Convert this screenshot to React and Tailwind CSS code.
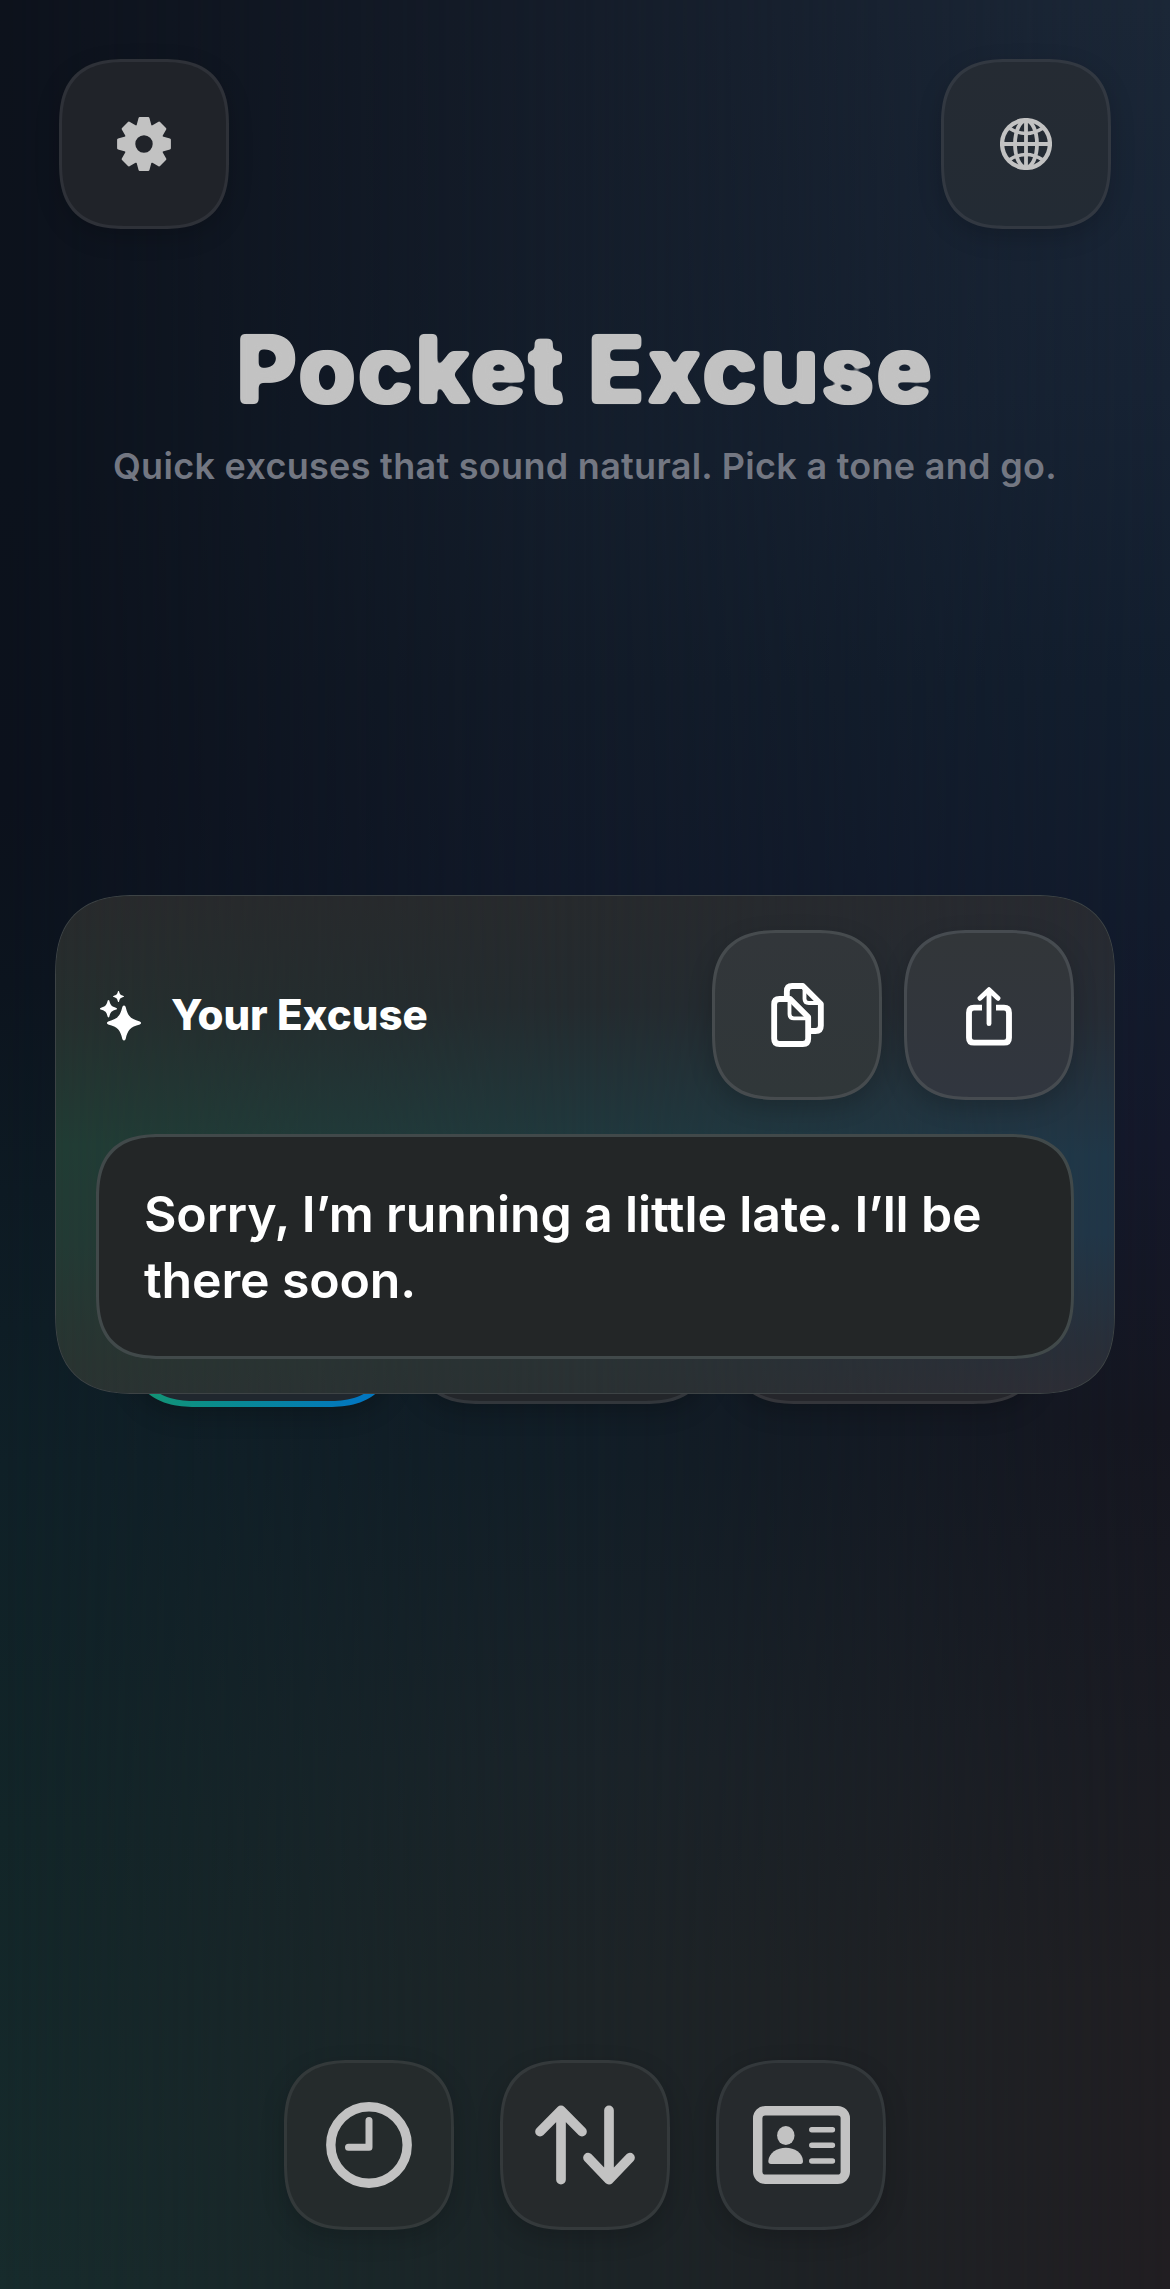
function Tile({ className, children }) {
  return (
    <button
      className={`flex size-[170px] shrink-0 items-center justify-center rounded-[68px] border-[3px] [corner-shape:superellipse(1.39)] ${className}`}
    >
      {children}
    </button>
  );
}

function GearIcon() {
  const angles = [0, 45, 90, 135, 180, 225, 270, 315];
  return (
    <svg className="size-[54px]" viewBox="-27 -27 54 54" fill="none">
      <circle r="14.4" stroke="#c2c2c2" strokeWidth="11.4" />
      {angles.map((a) => (
        <path
          key={a}
          transform={`rotate(${a})`}
          d="M-6.4 -17.5 L-4.2 -25.6 H4.2 L6.4 -17.5 Z"
          fill="#c2c2c2"
          stroke="#c2c2c2"
          strokeWidth="2.6"
          strokeLinejoin="round"
        />
      ))}
    </svg>
  );
}

function GlobeIcon() {
  return (
    <svg className="size-[52px]" viewBox="-26 -26 52 52" fill="none" stroke="#c2c2c2">
      <circle r="23.9" strokeWidth="4.3" />
      <path d="M0 -24 V24 M-24 0 H24" strokeWidth="3.8" />
      <ellipse rx="11" ry="23.5" strokeWidth="3.8" />
      <path d="M-17 -16 Q0 -5 17 -16 M-17 16 Q0 5 17 16" strokeWidth="3.6" />
    </svg>
  );
}

const STAR =
  "M-1.6 -16.2 Q0 -18.8 1.6 -16.2 C4 -6.6 6 -4.4 15.8 -1.6 Q18.4 0 15.8 1.6 C6 4.4 4 6.6 1.6 16.2 Q0 18.8 -1.6 16.2 C-4 6.6 -6 4.4 -15.8 1.6 Q-18.4 0 -15.8 -1.6 C-6 -4.4 -4 -6.6 -1.6 -16.2 Z";

function SparklesIcon() {
  return (
    <svg className="h-[50px] w-[42px]" viewBox="0 0 42 50" fill="#fff">
      <path transform="translate(24 32)" d={STAR} />
      <path transform="translate(8.5 17.7) scale(0.5)" d={STAR} />
      <path transform="translate(18.5 5.5) scale(0.32)" d={STAR} />
    </svg>
  );
}

function CopyIcon() {
  return (
    <svg className="h-[64px] w-[53px]" viewBox="246 309 158 192" fill="none" stroke="#fff" strokeLinejoin="round">
      <path
        d="M271 357 H303 L357 411 V476 Q357 492 341 492 H271 Q255 492 255 476 V373 Q255 357 271 357 Z"
        strokeWidth="17.5"
      />
      <path d="M301 360 V402 Q301 415 314 415 H355" strokeWidth="11.5" />
      <path d="M293 349 V334 Q293 318 309 318 H341 L395 372 V437 Q395 453 379 453 H365" strokeWidth="17.5" />
      <path d="M346 322 V356 Q346 369 359 369 H393" strokeWidth="11.5" />
    </svg>
  );
}

function ShareIcon() {
  return (
    <svg className="mt-[3px] h-[59px] w-[46px]" viewBox="831 322 138 177" fill="none" stroke="#fff">
      <path
        d="M879 384 H855 Q840 384 840 399 V474 Q840 489 855 489 H945 Q960 489 960 474 V399 Q960 384 945 384 H921"
        strokeWidth="17.5"
      />
      <path
        d="M900 432 V331 M873 356 L900 330 L927 356"
        strokeWidth="14.5"
        strokeLinecap="round"
        strokeLinejoin="round"
      />
    </svg>
  );
}

function ClockIcon() {
  return (
    <svg className="size-[86px]" viewBox="-43 -43 86 86" fill="none" stroke="#c2c2c2">
      <circle r="38.2" strokeWidth="9.4" />
      <path d="M0 -24.5 V2.3 H-20.5" strokeWidth="7" strokeLinecap="round" strokeLinejoin="round" />
    </svg>
  );
}

function ArrowsIcon() {
  return (
    <svg
      className="h-[80px] w-[100px]"
      viewBox="734 106 300 240"
      fill="none"
      stroke="#c2c2c2"
      strokeWidth="29"
      strokeLinecap="round"
      strokeLinejoin="round"
    >
      <path d="M812 330 V122 M749 186 L812 122 L875 186" />
      <path d="M956 122 V330 M893 264 L956 330 L1019 264" />
    </svg>
  );
}

function IdCardIcon() {
  return (
    <svg className="h-[78px] w-[97px]" viewBox="0 0 97 78" fill="none">
      <rect x="4.7" y="4.7" width="87.6" height="68.6" rx="7.5" stroke="#c2c2c2" strokeWidth="9.4" />
      <ellipse cx="32.8" cy="29.5" rx="8.7" ry="9.6" fill="#c2c2c2" />
      <path d="M18 58 Q15.3 58 15.3 55 C16 47 24 41.8 32.8 41.8 C41.6 41.8 49.6 47 50 55 Q50 58 47.5 58 Z" fill="#c2c2c2" />
      <path d="M58.8 23.7 H79.4 M58.8 39.3 H79.4 M58.8 55 H79.4" stroke="#c2c2c2" strokeWidth="5.5" strokeLinecap="round" />
    </svg>
  );
}

function Backdrop() {
  return (
    <div className="absolute inset-0 bg-[linear-gradient(to_bottom,#151d2a_0%,#141e2c_20%,#121b28_30%,#111929_39%,#101b27_52%,#121e27_64%,#1a2329_77%,#1d2427_87%,#1c2427_100%)]">
      <div className="absolute inset-0 bg-[linear-gradient(to_bottom,#0d121c_0%,#0c121c_20%,#0c111c_35%,#0c141e_43%,#0d1a23_52%,#0f2027_64%,#122528_80%,#172b2c_100%)] [mask-image:linear-gradient(to_right,black,transparent_50%)]" />
      <div className="absolute inset-0 bg-[linear-gradient(to_bottom,#1b2737_0%,#172334_17%,#121e2e_30%,#121b2c_40%,#14182a_50%,#151620_62%,#1a1b22_76%,#1f1e22_87%,#211e22_100%)] [mask-image:linear-gradient(to_left,black,transparent_50%)]" />
    </div>
  );
}

function ExcuseCard() {
  return (
    <section className="absolute left-[55px] top-[895px] w-[1060px] overflow-hidden rounded-[83px] border border-[#3d4345] bg-[linear-gradient(to_bottom,#272a2d_0%,#242b2f_22%,#20393e_50%,#22363a_70%,#2a3234_94%,#2a3133_100%)] [corner-shape:superellipse(1.39)]">
      <div className="absolute inset-0 bg-[linear-gradient(to_bottom,#282a2c_0%,#252f2e_24%,#213c34_50%,#233a34_70%,#293431_94%,#2a3332_100%)] [mask-image:linear-gradient(to_right,black,transparent_50%)]" />
      <div className="absolute inset-0 bg-[linear-gradient(to_bottom,#282a30_0%,#262c35_24%,#203748_52%,#213648_68%,#292e38_92%,#2d2d36_100%)] [mask-image:linear-gradient(to_left,black,transparent_50%)]" />
      <div className="relative px-[40px] pb-[34px] pt-[34px]">
        <div className="flex items-center">
          <div className="mt-[2px] flex pl-[4px]">
            <SparklesIcon />
          </div>
          <h2 className="ml-[29px] text-[42px] font-extrabold leading-none text-white">Your Excuse</h2>
          <div className="ml-auto flex gap-[22px]">
            <Tile className="border-[#464b4e] bg-[linear-gradient(#32363a,#303739)] shadow-[0_8px_24px_rgba(0,0,0,0.18)]">
              <CopyIcon />
            </Tile>
            <Tile className="border-[#464b50] bg-[linear-gradient(#323639,#31363f)] shadow-[0_8px_24px_rgba(0,0,0,0.18)]">
              <ShareIcon />
            </Tile>
          </div>
        </div>
        <p className="mt-[34px] h-[225px] rounded-[66px] border-[3px] border-[#41494a] bg-[#232627] pl-[45px] pt-[44px] text-[50px] font-semibold leading-[66px] tracking-[-0.15px] text-white [corner-shape:superellipse(1.39)]">
          Sorry, I’m running a little late. I’ll be
          <br />
          there soon.
        </p>
      </div>
    </section>
  );
}

export default function App() {
  return (
    <div className="relative h-[2289px] w-full overflow-hidden font-['Inter',sans-serif]">
      <svg className="absolute size-0" aria-hidden="true">
        <filter id="rounded-type" x="-5%" y="-10%" width="110%" height="120%" colorInterpolationFilters="sRGB">
          <feMorphology operator="dilate" radius="1" />
          <feGaussianBlur stdDeviation="2.8" />
          <feColorMatrix values="1 0 0 0 0  0 1 0 0 0  0 0 1 0 0  0 0 0 7 -2.9" />
        </filter>
      </svg>
      <Backdrop />
      <div className="relative flex h-full flex-col px-[59px] py-[59px]">
        <header className="flex justify-between">
          <Tile className="border-[#2e3138] bg-[#202329] shadow-[0_8px_24px_rgba(0,0,0,0.18)]">
            <GearIcon />
          </Tile>
          <Tile className="border-[#323841] bg-[linear-gradient(#252b33,#232b34)] shadow-[0_8px_24px_rgba(0,0,0,0.18)]">
            <GlobeIcon />
          </Tile>
        </header>
        <div className="mt-[93px] flex flex-col items-center whitespace-nowrap">
          <h1 className="text-[94px] font-extrabold leading-none tracking-[1.5px] text-[#c2c2c2] [filter:url(#rounded-type)]">
            Pocket Excuse
          </h1>
          <p className="mt-[32px] text-[36px] font-semibold leading-none tracking-[0.29px] text-[#737782]">
            Quick excuses that sound natural. Pick a tone and go.
          </p>
        </div>
        <div className="mt-[753px] flex justify-center gap-[19px]">
          <div className="h-[170px] w-[266px] rounded-[70px] bg-[linear-gradient(to_right,#16966f,#0a8d8a_30%,#0277bf_85%)] p-[6px] shadow-[0_8px_24px_rgba(0,0,0,0.22)] [corner-shape:superellipse(1.39)]">
            <div className="size-full rounded-[64px] bg-[#20272e] [corner-shape:superellipse(1.39)]" />
          </div>
          <div className="h-[167px] w-[297px] rounded-[68px] border-[3px] border-[#32363b] bg-[#23262a] shadow-[0_8px_24px_rgba(0,0,0,0.22)] [corner-shape:superellipse(1.39)]" />
          <div className="h-[167px] w-[311px] rounded-[68px] border-[3px] border-[#34353a] bg-[#25262b] shadow-[0_8px_24px_rgba(0,0,0,0.22)] [corner-shape:superellipse(1.39)]" />
        </div>
        <nav className="mt-auto flex justify-center gap-[46px]">
          <Tile className="border-[#33393a] bg-[#252b2c] shadow-[0_8px_24px_rgba(0,0,0,0.18)]">
            <ClockIcon />
          </Tile>
          <Tile className="border-[#34393b] bg-[#262a2c] shadow-[0_8px_24px_rgba(0,0,0,0.18)]">
            <ArrowsIcon />
          </Tile>
          <Tile className="border-[#33383b] bg-[#262a2d] shadow-[0_8px_24px_rgba(0,0,0,0.18)]">
            <IdCardIcon />
          </Tile>
        </nav>
      </div>
      <ExcuseCard />
    </div>
  );
}
